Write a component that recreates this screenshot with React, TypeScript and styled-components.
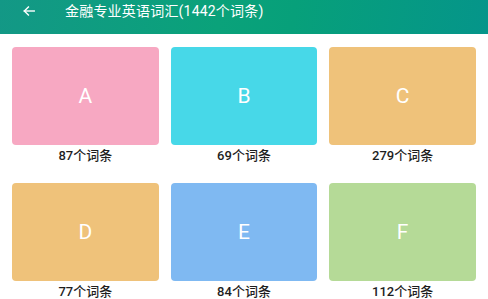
import React from "react";
import styled, { createGlobalStyle } from "styled-components";

const Global = createGlobalStyle`
  html, body { margin: 0; padding: 0; background: #ffffff; }
  body { font-family: Roboto, "Noto Sans CJK SC", sans-serif; }
  * { box-sizing: border-box; }
`;

const Page = styled.div`
  width: 488px;
  height: 299px;
  overflow: hidden;
  background: #ffffff;
`;

const Toolbar = styled.header`
  height: 34px;
  display: flex;
  align-items: flex-start;
  padding: 3px 0 0 20px;
  background: linear-gradient(100deg, #139886 0%, #0aa27a 45%, #07a07a 60%, #05958a 100%);
  color: #ffffff;
`;

const BackButton = styled.span`
  width: 18px;
  height: 16px;
  display: flex;
  align-items: center;
  justify-content: center;
  margin-right: 27px;
`;

const Title = styled.h1`
  margin: 0;
  font-size: 14px;
  font-weight: 400;
  line-height: 16px;
  letter-spacing: 0.2px;
`;

const Grid = styled.main`
  display: grid;
  grid-template-columns: repeat(3, 1fr);
  column-gap: 12px;
  row-gap: 19px;
  padding: 13px 12px 0 12px;
`;

const Item = styled.div`
  display: flex;
  flex-direction: column;
  align-items: center;
`;

const Card = styled.div<{ $bg: string }>`
  width: 100%;
  height: 98px;
  border-radius: 4px;
  background: ${(p) => p.$bg};
  display: flex;
  align-items: center;
  justify-content: center;
  color: #ffffff;
  font-size: 21px;
  font-weight: 400;
`;

const Count = styled.div`
  margin-top: 2px;
  font-size: 13px;
  line-height: 17px;
  font-weight: 500;
  color: #1e1e1e;
`;

const items = [
  { letter: "A", count: 87, bg: "#f7a8c2" },
  { letter: "B", count: 69, bg: "#47d8e8" },
  { letter: "C", count: 279, bg: "#efc27a" },
  { letter: "D", count: 77, bg: "#efc27a" },
  { letter: "E", count: 84, bg: "#7fb9f2" },
  { letter: "F", count: 112, bg: "#b5da97" },
];

export default function App() {
  return (
    <Page>
      <Global />
      <Toolbar>
        <BackButton>
          <svg width="14" height="14" viewBox="0 0 24 24" fill="none" stroke="#ffffff" strokeWidth="2.4" strokeLinecap="square">
            <path d="M21 12H4" />
            <path d="M11 5l-7 7 7 7" />
          </svg>
        </BackButton>
        <Title>金融专业英语词汇(1442个词条)</Title>
      </Toolbar>
      <Grid>
        {items.map((it) => (
          <Item key={it.letter}>
            <Card $bg={it.bg}>{it.letter}</Card>
            <Count>{it.count}个词条</Count>
          </Item>
        ))}
      </Grid>
    </Page>
  );
}
